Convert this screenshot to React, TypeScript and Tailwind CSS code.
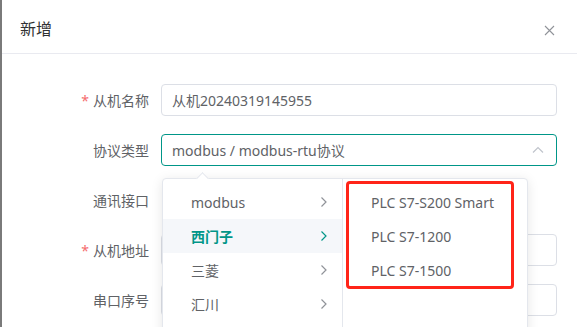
import React from "react";

const font = { fontFamily: '"Noto Sans", "Noto Sans CJK SC", sans-serif' };

type RowProps = {
  label: string;
  required?: boolean;
  children?: React.ReactNode;
};

const FormRow: React.FC<RowProps> = ({ label, required, children }) => (
  <div className="mb-[18px] flex h-[32px] items-center">
    <div className="w-[159px] pr-3 text-right text-[14px] text-[#606266]">
      {required && <span className="mr-1 text-[#f56c6c]">*</span>}
      {label}
    </div>
    <div className="w-[396px]">{children}</div>
  </div>
);

const Chevron: React.FC<{ color: string }> = ({ color }) => (
  <svg width="8" height="12" viewBox="0 0 8 12" fill="none">
    <path d="M1.5 1.5 L6 6 L1.5 10.5" stroke={color} strokeWidth="1.2" />
  </svg>
);

const brands = ["modbus", "西门子", "三菱", "汇川"];
const models = ["PLC S7-S200 Smart", "PLC S7-1200", "PLC S7-1500"];

export default function App() {
  return (
    <div
      className="relative h-[327px] w-[577px] overflow-hidden border-l-2 border-[#7a7a7a] bg-white"
      style={font}
    >
      <div className="flex h-[54px] items-center justify-between border-b border-[#e9eaf0] pl-[18px] pr-[22px] pt-1">
        <span className="text-[16px] text-[#303133]">新增</span>
        <svg width="11" height="11" viewBox="0 0 11 11" className="mt-1">
          <path d="M1 1 L10 10 M10 1 L1 10" stroke="#909399" strokeWidth="1.1" />
        </svg>
      </div>

      <div className="pt-[30px]">
        <FormRow label="从机名称" required>
          <div className="flex h-[32px] items-center rounded-[4px] border border-[#dcdfe6] px-[10px] text-[14px] text-[#606266]">
            从机20240319145955
          </div>
        </FormRow>
        <FormRow label="协议类型">
          <div className="flex h-[32px] items-center justify-between rounded-[4px] border border-[#009688] pl-[10px] pr-[12px] text-[14px] text-[#606266]">
            <span>modbus / modbus-rtu协议</span>
            <svg width="12" height="8" viewBox="0 0 12 8" fill="none">
              <path d="M1 6.5 L6 1.5 L11 6.5" stroke="#c0c4cc" strokeWidth="1.2" />
            </svg>
          </div>
        </FormRow>
        <FormRow label="通讯接口" />
        <FormRow label="从机地址" required>
          <div className="h-[32px] rounded-[4px] border border-[#dcdfe6]" />
        </FormRow>
        <FormRow label="串口序号">
          <div className="h-[32px] rounded-[4px] border border-[#dcdfe6]" />
        </FormRow>
      </div>

      {/* cascader dropdown */}
      <div className="absolute left-[160px] top-[178px] flex h-[170px] rounded-[4px] border border-[#e4e7ed] bg-white shadow-[0_2px_12px_0_rgba(0,0,0,0.1)]">
        <div className="absolute -top-[5px] left-[35px] h-[9px] w-[9px] rotate-45 border-l border-t border-[#e4e7ed] bg-white" />
        <div className="w-[180px] border-r border-[#e4e7ed] py-[6px]">
          {brands.map((b) => {
            const active = b === "西门子";
            return (
              <div
                key={b}
                className={`flex h-[34px] items-center justify-between pl-[28px] pr-[14px] text-[14px] ${
                  active ? "bg-[#f5f7fa] font-bold text-[#009688]" : "text-[#606266]"
                }`}
              >
                <span>{b}</span>
                <Chevron color={active ? "#009688" : "#909399"} />
              </div>
            );
          })}
        </div>
        <div className="w-[184px] py-[6px]">
          {models.map((m) => (
            <div key={m} className="flex h-[34px] items-center pl-[28px] text-[14px] text-[#606266]">
              {m}
            </div>
          ))}
        </div>
      </div>

      {/* annotation */}
      <div className="absolute left-[344px] top-[181px] h-[108px] w-[168px] rounded-[4px] border-[3px] border-[#ff2418]" />
    </div>
  );
}
